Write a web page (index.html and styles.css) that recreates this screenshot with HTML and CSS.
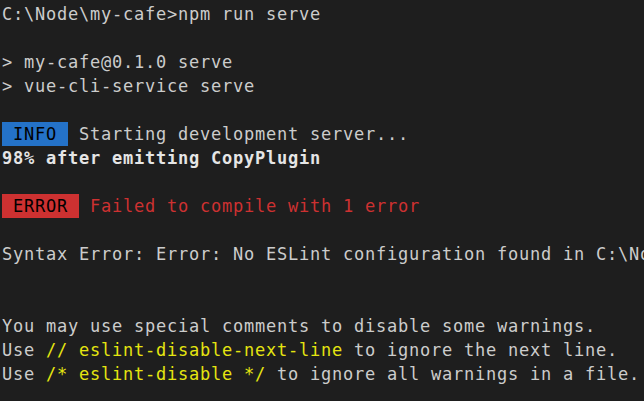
FILE: index.html
```html
<!DOCTYPE html>
<html>
<head>
<meta charset="utf-8">
<link rel="stylesheet" href="styles.css">
</head>
<body>
<div class="term">
<div class="line">C:\Node\my-cafe&gt;npm run serve</div>
<div class="line"> </div>
<div class="line">&gt; my-cafe@0.1.0 serve</div>
<div class="line">&gt; vue-cli-service serve</div>
<div class="line"> </div>
<div class="line"><span class="badge info"> INFO </span> Starting development server...</div>
<div class="line bold">98% after emitting CopyPlugin</div>
<div class="line"> </div>
<div class="line"><span class="badge error"> ERROR </span> <span class="red">Failed to compile with 1 error</span></div>
<div class="line"> </div>
<div class="line">Syntax Error: Error: No ESLint configuration found in C:\Node\my-cafe\src\main.js.</div>
<div class="line"> </div>
<div class="line"> </div>
<div class="line">You may use special comments to disable some warnings.</div>
<div class="line">Use <span class="yellow">// eslint-disable-next-line</span> to ignore the next line.</div>
<div class="line">Use <span class="yellow">/* eslint-disable */</span> to ignore all warnings in a file.</div>
</div>
</body>
</html>
```
FILE: styles.css
```css
html, body {
  margin: 0;
  padding: 0;
  background: #1e1e1e;
  overflow: hidden;
}
.term {
  padding: 2px 0 0 2px;
  font-family: "DejaVu Sans Mono", monospace;
  font-size: 17px;
  letter-spacing: 0.765px;
  color: #cccccc;
  width: 2000px;
}
.line {
  height: 24px;
  line-height: 24px;
  white-space: pre;
}
.bold {
  font-weight: bold;
  color: #e5e5e5;
}
.badge {
  display: inline-block;
  height: 24px;
  color: #000000;
}
.info {
  background: #2472c8;
}
.error {
  background: #cd3131;
}
.red {
  color: #cd3131;
}
.yellow {
  color: #e5e510;
}
```
